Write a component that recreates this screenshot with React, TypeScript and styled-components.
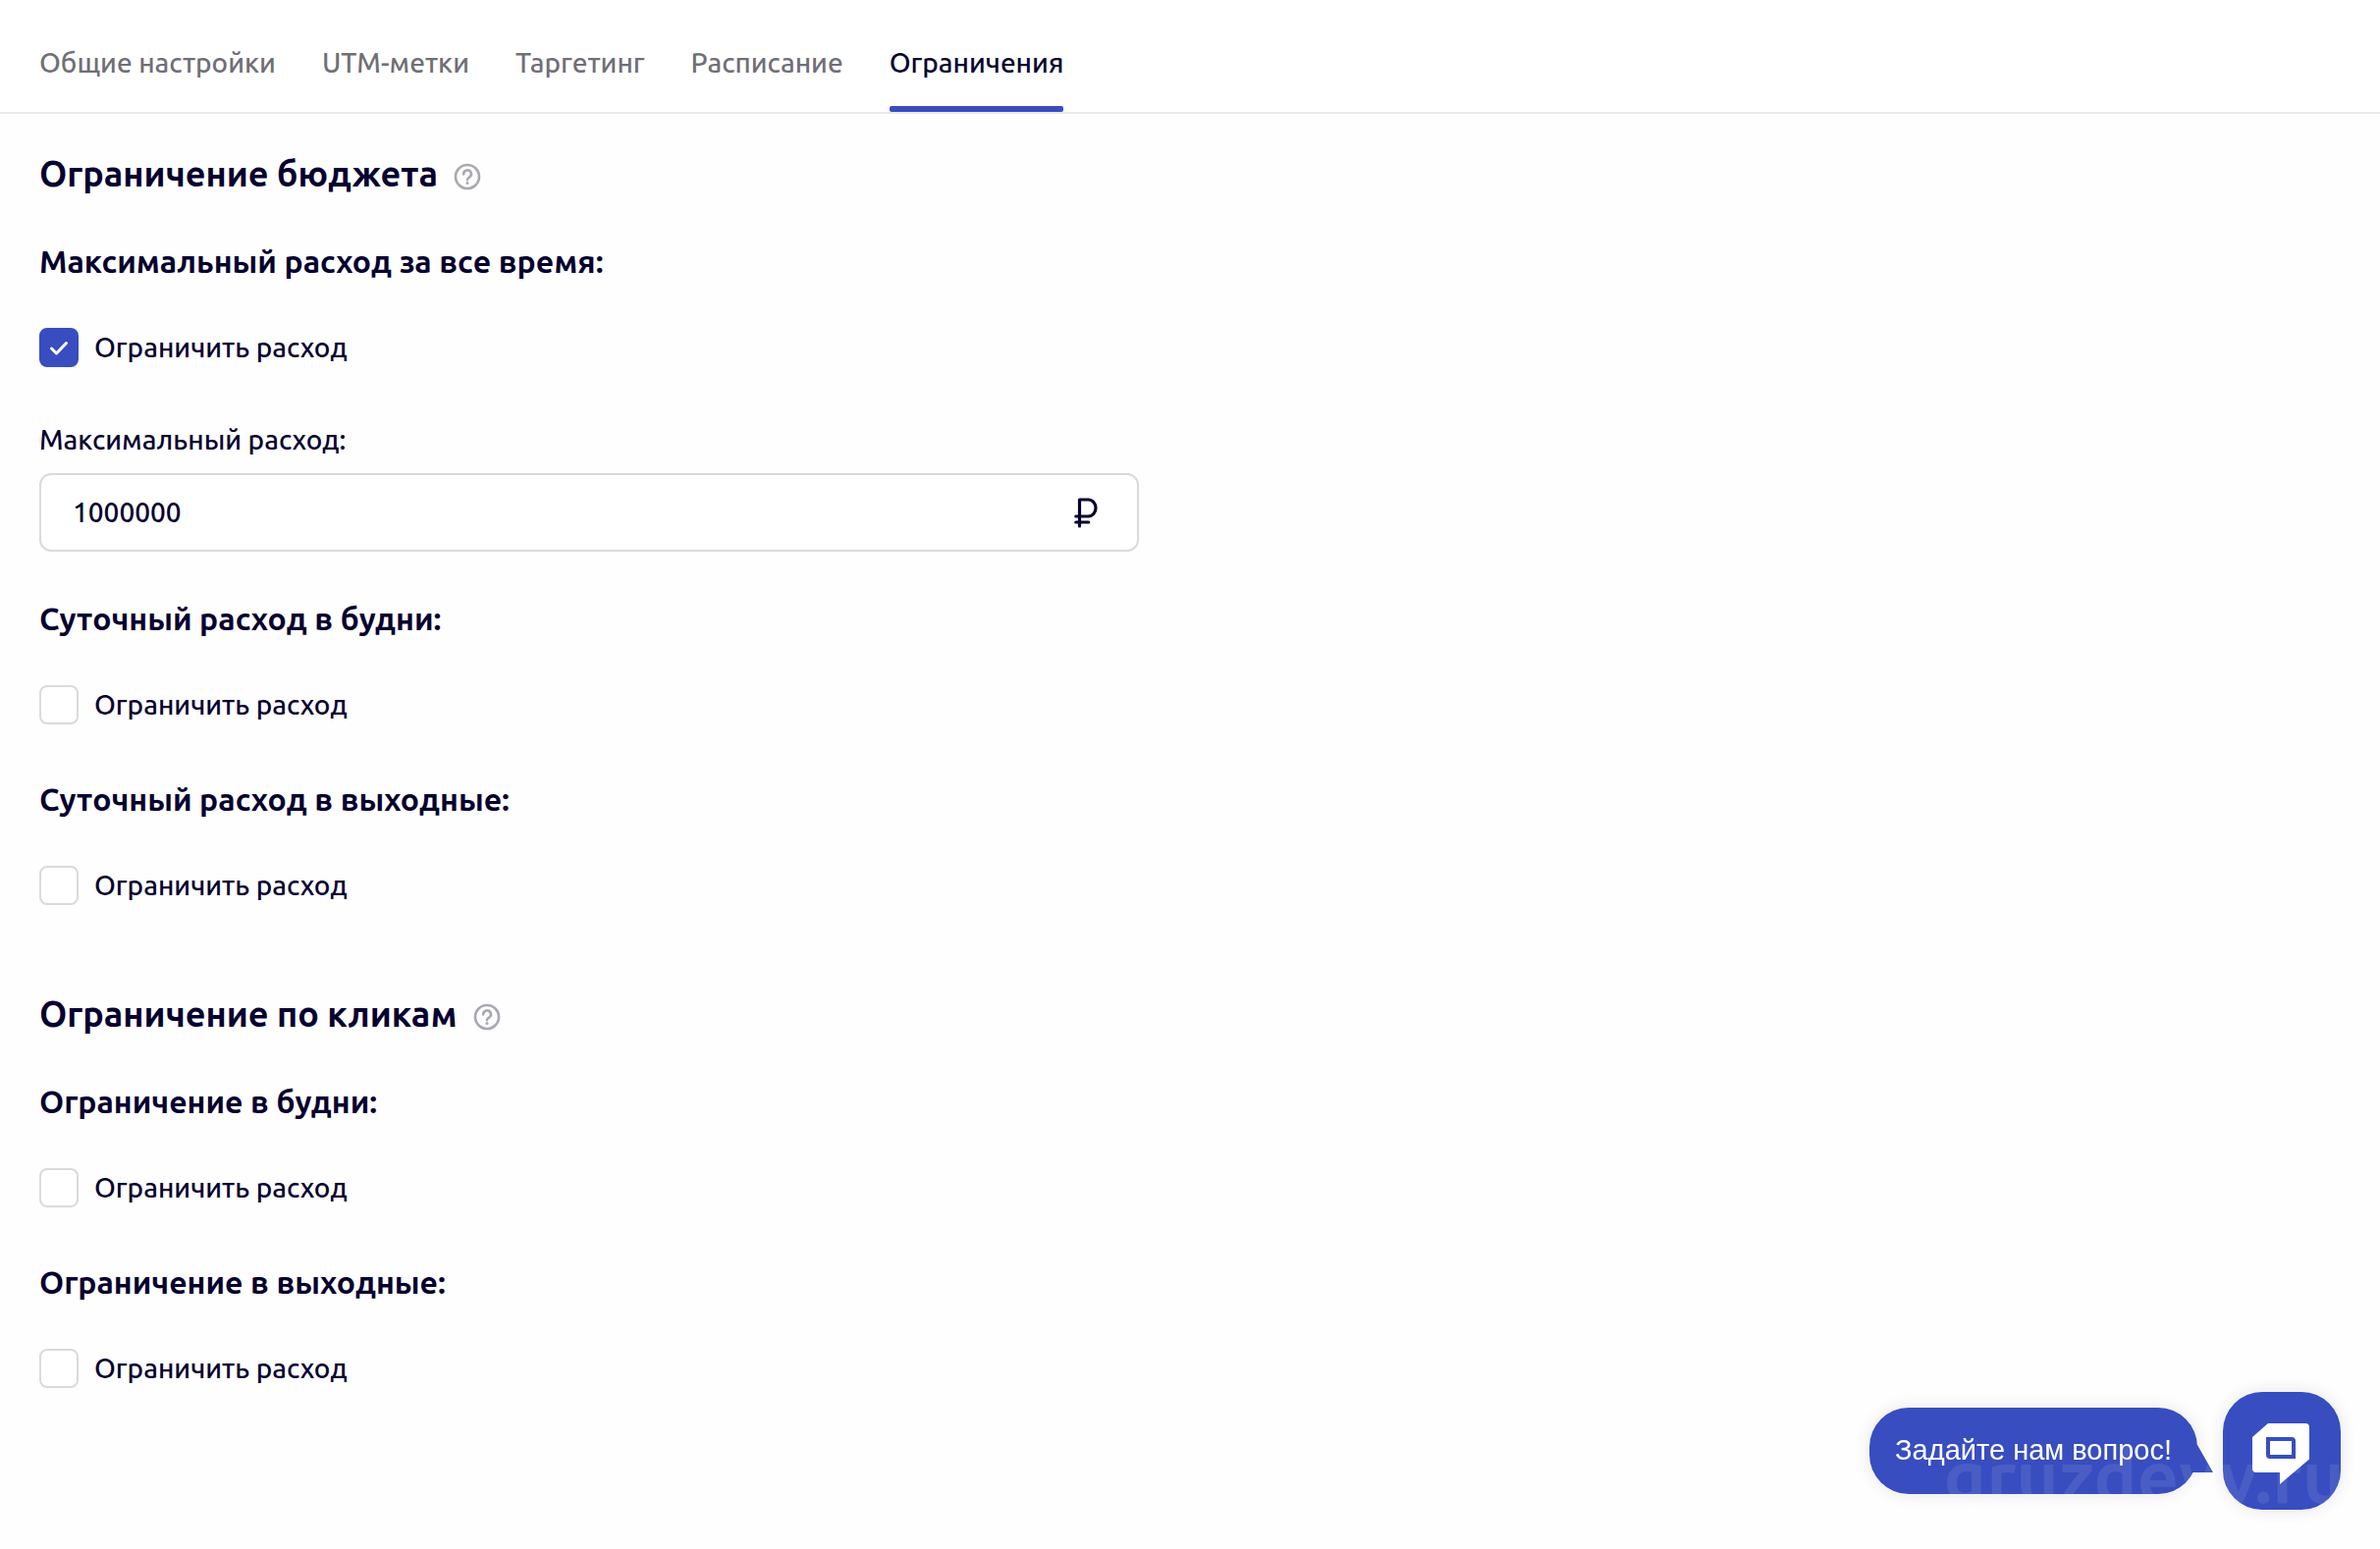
import React, { useState } from 'react'
import styled, { createGlobalStyle } from 'styled-components'

const tabs = ['Общие настройки', 'UTM-метки', 'Таргетинг', 'Расписание', 'Ограничения']

// Tabs
interface TabsProps {
  active: string
  onChange: (tab: string) => void
}

function Tabs({ active, onChange }: TabsProps) {
  return (
    <TabList>
      {tabs.map(tab => (
        <Tab type='button' key={`tab-${tab}`} $active={tab === active} onClick={() => onChange(tab)}>
          {tab}
        </Tab>
      ))}
    </TabList>
  )
}

// Section title with a help button
function Title({ children }: { children: string }) {
  return (
    <TitleBlock>
      <SectionTitle>{children}</SectionTitle>
      <HelpButton type='button' aria-label='Справка'>
        <svg width='28' height='28' viewBox='0 0 28 28' fill='none' stroke='currentColor' strokeWidth='2.6'>
          <circle cx='14' cy='14' r='12' />
          <path d='M10.2 11.4a3.9 3.9 0 1 1 5.9 3.2c-1.3.8-2.1 1.4-2.1 2.6' strokeLinecap='round' />
          <circle cx='14' cy='20.6' r='1.5' fill='currentColor' stroke='none' />
        </svg>
      </HelpButton>
    </TitleBlock>
  )
}

// Single limit
interface LimitProps {
  id: string
  title: string
  defaultChecked?: boolean
  children?: React.ReactNode
}

function Limit({ id, title, defaultChecked = false, children }: LimitProps) {
  const [checked, setChecked] = useState(defaultChecked)

  return (
    <LimitBlock>
      <LimitTitle>{title}</LimitTitle>
      <CheckRow htmlFor={id}>
        <CheckHolder>
          <Checkbox id={id} type='checkbox' checked={checked} onChange={e => setChecked(e.target.checked)} />
          {checked && (
            <CheckMark viewBox='0 0 40 40' fill='none' stroke='#fff' strokeWidth='3'>
              <path d='M12.5 21l5 5 10-10.5' strokeLinecap='round' strokeLinejoin='round' />
            </CheckMark>
          )}
        </CheckHolder>
        Ограничить расход
      </CheckRow>
      {checked && children}
    </LimitBlock>
  )
}

function Chat() {
  return (
    <ChatBlock>
      <ChatHint type='button'>
        Задайте нам вопрос!
        <HintTail viewBox='0 0 22 30'>
          <path d='M0 0h5l16 28H0z' fill='#384dbf' />
        </HintTail>
      </ChatHint>
      <ChatButton type='button' aria-label='Открыть чат'>
        <svg width='58' height='62' viewBox='0 0 58 62'>
          <path d='M16 0h38q4 0 4 4v32.5L28 62V50H4q-4 0-4-4V14z' fill='#fff' />
          <path d='M16 16h24q2 0 2 2v16H18q-2 0-2-2z' fill='none' stroke='#384dbf' strokeWidth='4' />
        </svg>
      </ChatButton>
      <Watermark>gruzdevv.ru</Watermark>
    </ChatBlock>
  )
}

export default function App() {
  const [active, setActive] = useState('Ограничения')
  const [amount, setAmount] = useState('1000000')

  return (
    <>
      <GlobalStyle />
      <Tabs active={active} onChange={setActive} />
      <Content>
        <Section>
          <Title>Ограничение бюджета</Title>
          <Limits>
            <Limit id='total' title='Максимальный расход за все время:' defaultChecked>
              <Field>
                <FieldLabel htmlFor='amount'>Максимальный расход:</FieldLabel>
                <InputBox>
                  <Input id='amount' inputMode='numeric' value={amount} onChange={e => setAmount(e.target.value)} />
                  <svg width='24' height='32' viewBox='0 0 24 32' fill='none' stroke='currentColor' strokeWidth='3.2'>
                    <path
                      d='M5.5 30V3h9a7.5 8.5 0 0 1 0 17H1.8M1.8 26h13'
                      strokeLinecap='round'
                      strokeLinejoin='round'
                    />
                  </svg>
                </InputBox>
              </Field>
            </Limit>
            <Limit id='weekdays' title='Суточный расход в будни:' />
            <Limit id='weekend' title='Суточный расход в выходные:' />
          </Limits>
        </Section>
        <Section>
          <Title>Ограничение по кликам</Title>
          <Limits>
            <Limit id='clicks-weekdays' title='Ограничение в будни:' />
            <Limit id='clicks-weekend' title='Ограничение в выходные:' />
          </Limits>
        </Section>
      </Content>
      <Chat />
    </>
  )
}

// Styled components
const GlobalStyle = createGlobalStyle`
  * {
    box-sizing: border-box;
  }

  body {
    margin: 0;
    background-color: #fefefe;
    color: #06002f;
    font-family: Ubuntu, 'Noto Sans', sans-serif;
    font-size: 28px;
    font-weight: 500;
    line-height: 40px;
  }

  button,
  input {
    font: inherit;
    color: inherit;
  }

  svg {
    display: block;
  }
`
const TabList = styled.nav`
  display: flex;
  gap: 47px;
  padding: 0 40px;
  background-color: #fff;
  border-bottom: 2px solid #e8e8ec;
`
const Tab = styled.button<{ $active: boolean }>`
  position: relative;
  padding: 44px 0 30px;
  border: none;
  background: none;
  color: ${props => (props.$active ? '#06002f' : '#6f6f76')};
  white-space: nowrap;
  cursor: pointer;

  &::after {
    content: '';
    position: absolute;
    left: 0;
    right: 0;
    bottom: 0;
    height: 6px;
    border-radius: 2px;
    background-color: ${props => (props.$active ? '#384dbf' : 'transparent')};
  }
`
const Content = styled.main`
  display: flex;
  flex-direction: column;
  gap: 87px;
  padding: 37px 40px 160px;
`
const Section = styled.section`
  display: flex;
  flex-direction: column;
  gap: 45px;
`
const TitleBlock = styled.div`
  display: flex;
  align-items: center;
  gap: 16px;
`
const SectionTitle = styled.h2`
  margin: 0;
  font-size: 36px;
  font-weight: 700;
  line-height: 48px;
`
const HelpButton = styled.button`
  padding: 6px 0 0;
  border: none;
  background: none;
  color: #a9a9b2;
  cursor: pointer;
`
const Limits = styled.div`
  display: flex;
  flex-direction: column;
  gap: 56px;
`
const LimitBlock = styled.div`
  display: flex;
  flex-direction: column;
  align-items: flex-start;
`
const LimitTitle = styled.h3`
  margin: 0 0 48px;
  font-size: 32px;
  font-weight: 700;
  line-height: 40px;
`
const CheckRow = styled.label`
  display: flex;
  align-items: center;
  gap: 16px;
  cursor: pointer;
`
const CheckHolder = styled.span`
  position: relative;
  width: 40px;
  height: 40px;
`
const Checkbox = styled.input`
  appearance: none;
  display: block;
  width: 40px;
  height: 40px;
  margin: 0;
  border: 2px solid #dadade;
  border-radius: 8px;
  background-color: #fff;
  cursor: pointer;

  &:checked {
    border-color: #384dbf;
    background-color: #384dbf;
  }
`
const CheckMark = styled.svg`
  position: absolute;
  inset: 0;
  pointer-events: none;
`
const Field = styled.div`
  width: 100%;
  max-width: 1120px;
  margin-top: 54px;
  margin-bottom: -8px;
`
const FieldLabel = styled.label`
  display: block;
  margin-bottom: 14px;
`
const InputBox = styled.div`
  display: flex;
  align-items: center;
  height: 80px;
  padding: 0 40px 0 32px;
  border: 2px solid #dadade;
  border-radius: 12px;
  background-color: #fff;
`
const Input = styled.input`
  flex: 1;
  min-width: 0;
  padding: 0;
  border: none;
  outline: none;
  background: none;
`
const ChatBlock = styled.aside`
  position: fixed;
  right: 40px;
  bottom: 40px;
  display: flex;
  align-items: center;
  gap: 26px;
`
const ChatHint = styled.button`
  position: relative;
  height: 88px;
  padding: 0 26px 2px;
  border: none;
  border-radius: 40px;
  background-color: #384dbf;
  box-shadow: 0 0 16px rgba(60, 40, 60, 0.12);
  color: #fff;
  font-family: 'Liberation Sans', Arial, sans-serif;
  font-size: 29px;
  font-weight: 400;
  white-space: nowrap;
  cursor: pointer;
`
const HintTail = styled.svg`
  position: absolute;
  right: -17px;
  bottom: 20px;
  width: 22px;
  height: 30px;
`
const ChatButton = styled.button`
  display: flex;
  align-items: center;
  justify-content: center;
  width: 120px;
  height: 120px;
  padding: 6px 2px 0 0;
  border: none;
  border-radius: 40px;
  background-color: #384dbf;
  box-shadow: 0 0 16px rgba(60, 40, 60, 0.12);
  cursor: pointer;
`
const Watermark = styled.span`
  position: absolute;
  right: -4px;
  bottom: -6px;
  color: rgba(255, 255, 255, 0.09);
  font-size: 74px;
  font-weight: 700;
  line-height: 80px;
  pointer-events: none;
`
